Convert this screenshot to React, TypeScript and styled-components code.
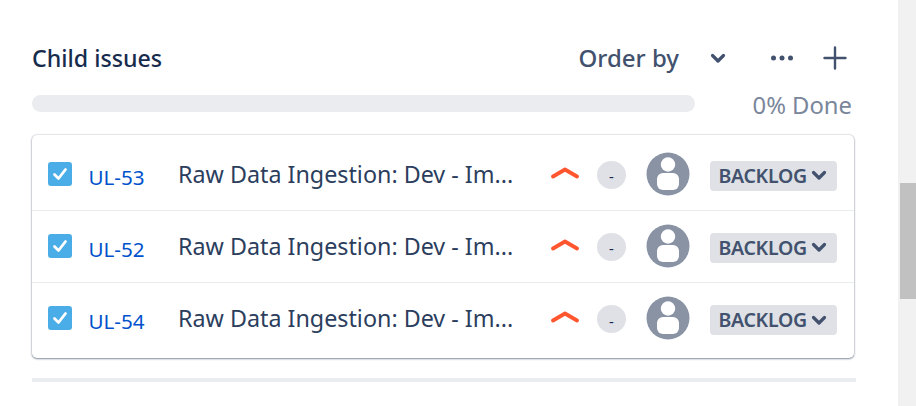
import React from "react";
import styled, { createGlobalStyle } from "styled-components";

const Global = createGlobalStyle`
  html, body { margin: 0; padding: 0; background: #fff; overflow: hidden; }
  body { font-family: "Noto Sans", "Open Sans", sans-serif; }
`;
const Page = styled.div`
  display: flex;
  width: 916px;
  height: 406px;
  overflow: hidden;
`;
const Main = styled.main`
  width: 898px;
  padding: 38px 42px 0 32px;
  box-sizing: border-box;
`;
const Scrollbar = styled.div`
  width: 18px;
  height: 406px;
  background: #f1f1f1;
  padding: 183px 0 0 2px;
  box-sizing: border-box;
`;
const Thumb = styled.div`
  width: 16px;
  height: 116px;
  background: #c1c1c1;
`;
const Header = styled.header`
  display: flex;
  align-items: center;
  height: 40px;
  color: #172b4d;
`;
const Title = styled.h2`
  flex: 1;
  margin: 0;
  font-size: 23.2px;
  font-weight: 500;
  color: #172b4d;
`;
const OrderBy = styled.span`
  font-size: 24px;
  font-weight: 500;
  color: #42526e;
  margin-bottom: 2px;
`;
const HeaderIcons = styled.div`
  display: flex;
  align-items: center;
  color: #42526e;
`;
const ProgressRow = styled.div`
  display: flex;
  align-items: flex-start;
  height: 22px;
  margin-top: 17px;
`;
const Progress = styled.div`
  width: 663px;
  height: 17px;
  border-radius: 9px;
  background: #ebecf0;
`;
const Done = styled.span`
  flex: 1;
  margin-top: -1px;
  text-align: right;
  font-size: 23.8px;
  line-height: 22px;
  color: #7a869a;
  padding-right: 4px;
`;
const Card = styled.section`
  margin-top: 18px;
  width: 822px;
  height: 223px;
  box-sizing: border-box;
  border-radius: 5px;
  background: #fff;
  box-shadow: 0 1px 2px rgba(9, 30, 66, 0.45), 0 0 2px rgba(9, 30, 66, 0.3);
  padding-top: 4px;
`;
const Row = styled.div<{ $last?: boolean }>`
  display: flex;
  align-items: center;
  height: 72px;
  padding: 0 17px 0 16px;
  border-bottom: ${(p) => (p.$last ? "none" : "1px solid #ebecf0")};
  box-sizing: border-box;
`;
const Check = styled.span`
  width: 24px;
  height: 24px;
  margin-bottom: 2px;
  border-radius: 3px;
  background: #4bade8;
  display: flex;
  align-items: center;
  justify-content: center;
  flex: none;
`;
const Key = styled.a`
  width: 89.5px;
  margin-left: 16.5px;
  padding-top: 4px;
  font-size: 20.6px;
  color: #0052cc;
  flex: none;
`;
const Summary = styled.span`
  width: 373px;
  flex: none;
  margin-bottom: 2px;
  font-size: 23.3px;
  color: #2c3e5d;
  white-space: nowrap;
`;
const Priority = styled.svg`
  width: 28px;
  height: 14px;
  margin-bottom: 4px;
  flex: none;
`;
const Points = styled.span`
  width: 29px;
  height: 28px;
  margin-left: 18px;
  padding-top: 3px;
  box-sizing: border-box;
  border-radius: 50%;
  background: #dfe1e6;
  color: #172b4d;
  font-size: 15px;
  display: flex;
  align-items: center;
  justify-content: center;
  flex: none;
`;
const Avatar = styled.svg`
  width: 44px;
  height: 44px;
  margin-left: 20px;
  margin-bottom: 2px;
  flex: none;
`;
const Status = styled.span`
  margin-left: 20px;
  margin-top: 2px;
  width: 127px;
  height: 30px;
  box-sizing: border-box;
  padding: 0 0 1px 8.5px;
  border-radius: 4px;
  background: #dfe1e6;
  color: #42526e;
  font-size: 19.5px;
  font-weight: 600;
  letter-spacing: -0.3px;
  display: flex;
  align-items: center;
  gap: 4px;
  flex: none;
`;
const Divider = styled.hr`
  width: 824px;
  height: 4px;
  margin: 20px 0 0;
  border: 0;
  background: #ebecf0;
`;

const Chevron = ({ w = 16 }: { w?: number }) => (
  <svg width={w} height={w} viewBox="0 0 16 16" fill="none">
    <path d="M2.5 5.5 8 11l5.5-5.5" stroke="#42526e" strokeWidth="3.2" strokeLinecap="round" strokeLinejoin="round" />
  </svg>
);

const rows = [{ key: "UL-53" }, { key: "UL-52" }, { key: "UL-54" }];

export default function App() {
  return (
    <Page>
      <Global />
      <Main>
        <Header>
          <Title>Child issues</Title>
          <OrderBy>Order by</OrderBy>
          <HeaderIcons>
            <svg width="16" height="16" viewBox="0 0 16 16" style={{ marginLeft: 31 }} fill="none">
              <path d="M2.5 5.5 8 11l5.5-5.5" stroke="#42526e" strokeWidth="3.2" strokeLinecap="round" strokeLinejoin="round" />
            </svg>
            <svg width="24" height="8" viewBox="0 0 24 8" style={{ marginLeft: 44 }}>
              <circle cx="3.5" cy="4" r="2.5" fill="#42526e" />
              <circle cx="12" cy="4" r="2.5" fill="#42526e" />
              <circle cx="20.5" cy="4" r="2.5" fill="#42526e" />
            </svg>
            <svg width="24" height="24" viewBox="0 0 24 24" style={{ marginLeft: 29, marginRight: 9 }}>
              <path d="M12 1.5v21M1.5 12h21" stroke="#42526e" strokeWidth="2.4" strokeLinecap="round" />
            </svg>
          </HeaderIcons>
        </Header>
        <ProgressRow>
          <Progress />
          <Done>0% Done</Done>
        </ProgressRow>
        <Card>
          {rows.map((r, i) => (
            <Row key={r.key} $last={i === rows.length - 1}>
              <Check>
                <svg width="16" height="16" viewBox="0 0 16 16" fill="none">
                  <path d="M2.5 8.5 6.5 12.5 13.5 3.5" stroke="#fff" strokeWidth="2.8" strokeLinecap="round" strokeLinejoin="round" />
                </svg>
              </Check>
              <Key>{r.key}</Key>
              <Summary>Raw Data Ingestion: Dev - Im...</Summary>
              <Priority viewBox="0 0 28 14" fill="none">
                <path d="M2 10.5 14 3.5 26 10.5" stroke="#ff5630" strokeWidth="3.8" strokeLinecap="round" strokeLinejoin="round" />
              </Priority>
              <Points>-</Points>
              <Avatar viewBox="0 0 44 44">
                <circle cx="22" cy="22" r="21.5" fill="#8993a4" />
                <circle cx="22" cy="12.5" r="7.2" fill="#fff" />
                <rect x="11" y="21" width="22" height="17" rx="6" fill="#fff" />
              </Avatar>
              <Status>
                BACKLOG
                <Chevron w={16} />
              </Status>
            </Row>
          ))}
        </Card>
        <Divider />
      </Main>
      <Scrollbar>
        <Thumb />
      </Scrollbar>
    </Page>
  );
}
